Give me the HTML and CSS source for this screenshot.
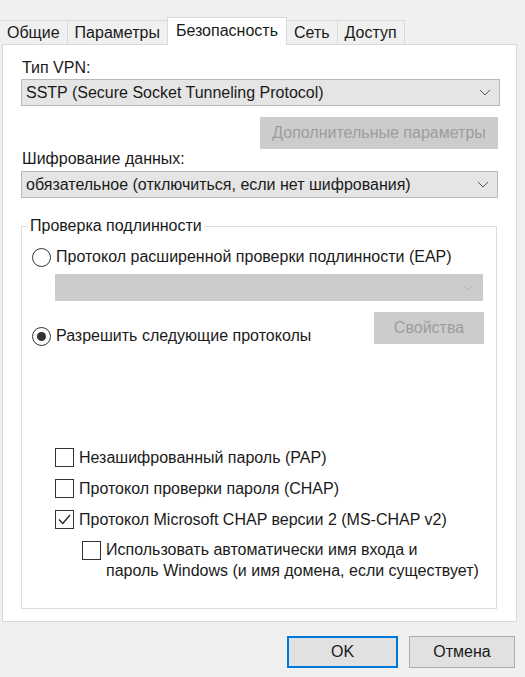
FILE: index.html
```html
<!DOCTYPE html>
<html lang="ru">
<head>
<meta charset="utf-8">
<title>Свойства VPN</title>
<link rel="stylesheet" href="styles.css">
</head>
<body>
<div class="dialog">
  <div class="tabs">
    <div class="tab">Общие</div>
    <div class="tab">Параметры</div>
    <div class="tab active">Безопасность</div>
    <div class="tab">Сеть</div>
    <div class="tab">Доступ</div>
  </div>
  <div class="panel">
    <div class="label">Тип VPN:</div>
    <div class="select sel-vpn">
      <span>SSTP (Secure Socket Tunneling Protocol)</span>
      <svg class="chev" width="12" height="7" viewBox="0 0 12 7"><path d="M1 1 L6 6 L11 1" fill="none" stroke="#555" stroke-width="1"/></svg>
    </div>
    <div class="btn-row">
      <div class="btn disabled btn-adv">Дополнительные параметры</div>
    </div>
    <div class="label">Шифрование данных:</div>
    <div class="select sel-enc">
      <span>обязательное (отключиться, если нет шифрования)</span>
      <svg class="chev" width="12" height="7" viewBox="0 0 12 7"><path d="M1 1 L6 6 L11 1" fill="none" stroke="#555" stroke-width="1"/></svg>
    </div>
    <fieldset class="group">
      <legend>Проверка подлинности</legend>
      <div class="radio-row">
        <span class="radio"></span>
        <span>Протокол расширенной проверки подлинности (EAP)</span>
      </div>
      <div class="select disabled sel-eap">
        <span></span>
        <svg class="chev" width="12" height="7" viewBox="0 0 12 7"><path d="M1 1 L6 6 L11 1" fill="none" stroke="#b4b4b4" stroke-width="1"/></svg>
      </div>
      <div class="allow-row">
        <div class="radio-row allow">
          <span class="radio checked"></span>
          <span>Разрешить следующие протоколы</span>
        </div>
        <div class="btn disabled btn-props">Свойства</div>
      </div>
      <div class="checks">
        <div class="check-row">
          <span class="box"></span>
          <span>Незашифрованный пароль (PAP)</span>
        </div>
        <div class="check-row">
          <span class="box"></span>
          <span>Протокол проверки пароля (CHAP)</span>
        </div>
        <div class="check-row">
          <span class="box"><svg width="17" height="17" viewBox="0 0 17 17"><path d="M3 8.5 L6.8 12.5 L14 4" fill="none" stroke="#222" stroke-width="1.3"/></svg></span>
          <span>Протокол Microsoft CHAP версии 2 (MS-CHAP v2)</span>
        </div>
        <div class="check-row sub">
          <span class="box"></span>
          <span class="multi">Использовать автоматически имя входа и<br>пароль Windows (и имя домена, если существует)</span>
        </div>
      </div>
    </fieldset>
  </div>
  <div class="footer">
    <div class="btn btn-ok">OK</div>
    <div class="btn btn-cancel">Отмена</div>
  </div>
</div>
</body>
</html>
```

FILE: styles.css
```css
html, body {
  margin: 0;
  padding: 0;
  background: #f0f0f0;
}

body {
  font-family: "Liberation Sans", Arial, sans-serif;
  font-size: 16px;
  color: #1a1a1a;
  width: 525px;
  height: 677px;
  overflow: hidden;
}

.dialog {
  display: flex;
  flex-direction: column;
}

.tabs {
  display: flex;
  align-items: flex-end;
  height: 45px;
  padding-left: 0;
  position: relative;
  z-index: 1;
}

.tab {
  height: 24px;
  line-height: 23px;
  padding: 0 7px;
  border: 1px solid #d9d9d9;
  border-bottom: none;
  box-sizing: border-box;
  background: #f0f0f0;
  margin-left: -1px;
  margin-bottom: 1px;
}

.tab:first-child {
  margin-left: 0;
  border-left: none;
}

.tab.active {
  height: 28px;
  line-height: 26px;
  background: #ffffff;
  margin-bottom: 0;
  padding: 0 8px;
  margin-right: 0;
}

.panel {
  margin: -1px 8px 0 2px;
  background: #ffffff;
  border: 1px solid #d9d9d9;
  height: 578px;
  box-sizing: border-box;
  padding: 13px 15px 0 18px;
  display: flex;
  flex-direction: column;
}

.label {
  line-height: 20px;
  padding-left: 1px;
}

.select {
  height: 27px;
  box-sizing: border-box;
  background: #e5e5e5;
  border: 1px solid #b9b9b9;
  display: flex;
  align-items: center;
  justify-content: space-between;
  padding: 0 8px 0 4px;
}

.sel-vpn {
  margin-top: 1px;
  width: 479px;
}

.sel-enc {
  margin-top: 2px;
  width: 477px;
}

.chev {
  display: block;
}

.btn-row {
  display: flex;
  justify-content: flex-end;
  margin-top: 11px;
  width: 477px;
}

.btn {
  box-sizing: border-box;
  height: 32px;
  display: flex;
  align-items: center;
  justify-content: center;
  background: #e1e1e1;
  border: 1px solid #adadad;
}

.btn.disabled {
  background: #cccccc;
  border-color: #cccccc;
  color: #9d9d9d;
}

.btn-adv {
  width: 238px;
}

.group {
  margin: 18px 0 0 0;
  width: 476px;
  box-sizing: border-box;
  border: 1px solid #dcdcdc;
  padding: 11px 12px 27px 10px;
  min-width: 0;
}

.group legend {
  padding: 0 2px;
  margin-left: -4px;
  line-height: 20px;
}

.radio-row {
  display: flex;
  align-items: center;
  line-height: 20px;
  gap: 5px;
}

.radio {
  width: 19px;
  height: 19px;
  box-sizing: border-box;
  border: 1px solid #333;
  border-radius: 50%;
  display: flex;
  align-items: center;
  justify-content: center;
  flex: none;
}

.radio.checked::after {
  content: "";
  width: 9px;
  height: 9px;
  border-radius: 50%;
  background: #333;
}

.sel-eap {
  margin: 7px 0 0 23px;
  width: 428px;
}

.select.disabled {
  background: #cccccc;
  border-color: #cccccc;
}

.allow-row {
  display: flex;
  justify-content: space-between;
  align-items: flex-start;
  margin-top: 11px;
  padding-right: 0;
}

.allow {
  margin-top: 14px;
}

.btn-props {
  width: 110px;
}

.checks {
  margin: 102px 0 0 23px;
  display: flex;
  flex-direction: column;
  gap: 12px;
}

.check-row {
  display: flex;
  align-items: center;
  line-height: 19px;
  gap: 5px;
}

.box {
  width: 19px;
  height: 19px;
  box-sizing: border-box;
  border: 1px solid #333;
  background: #fff;
  display: flex;
  align-items: center;
  justify-content: center;
  flex: none;
}

.box svg {
  display: block;
}

.check-row.sub {
  margin: -2px 0 0 27px;
  align-items: flex-start;
}

.check-row.sub .box {
  margin-top: 2px;
}

.multi {
  line-height: 21px;
}

.footer {
  display: flex;
  justify-content: flex-end;
  gap: 11px;
  margin-top: 14px;
  padding-right: 10px;
}

.btn-ok {
  width: 111px;
  border: 2px solid #0078d7;
}

.btn-cancel {
  width: 106px;
}
```
